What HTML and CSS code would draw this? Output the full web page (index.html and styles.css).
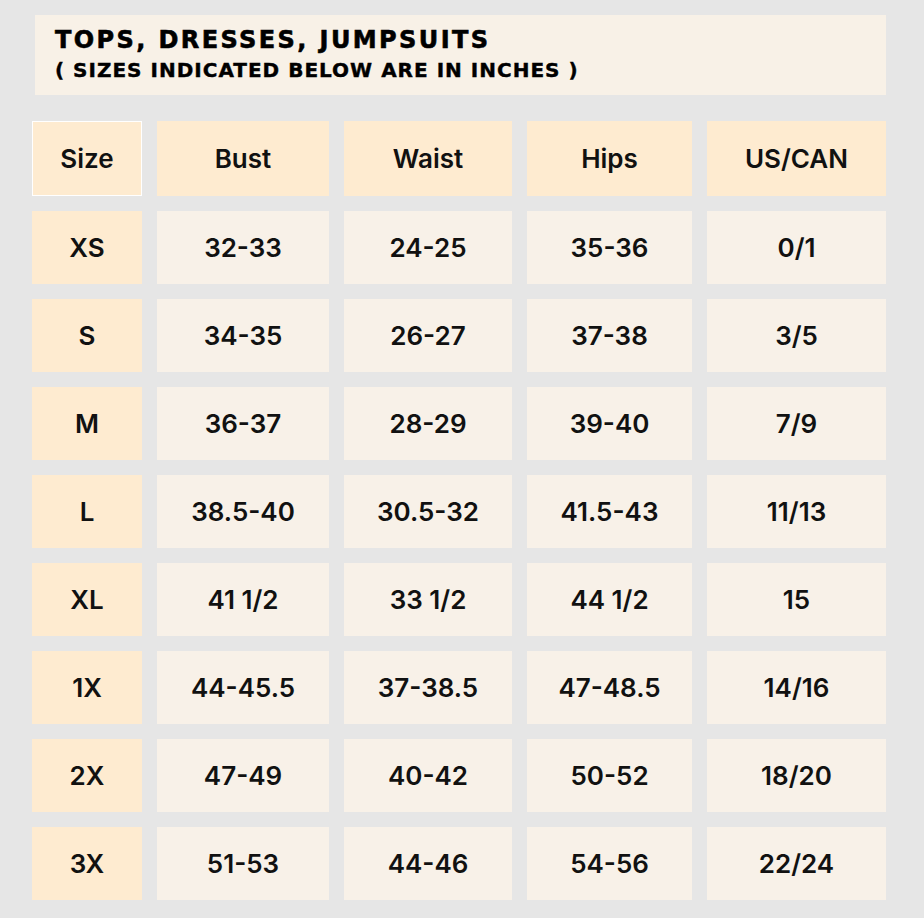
FILE: index.html
```html
<!DOCTYPE html>
<html>
<head>
<meta charset="utf-8">
<link rel="stylesheet" href="styles.css">
</head>
<body>
<div class="page">
  <div class="banner">
    <div class="title">TOPS, DRESSES, JUMPSUITS</div>
    <div class="subtitle">( SIZES INDICATED BELOW ARE IN INCHES )</div>
  </div>
  <div class="chart">
    <div class="cell head first">Size</div>
    <div class="cell head">Bust</div>
    <div class="cell head">Waist</div>
    <div class="cell head">Hips</div>
    <div class="cell head">US/CAN</div>

    <div class="cell size">XS</div><div class="cell">32-33</div><div class="cell">24-25</div><div class="cell">35-36</div><div class="cell">0/1</div>
    <div class="cell size">S</div><div class="cell">34-35</div><div class="cell">26-27</div><div class="cell">37-38</div><div class="cell">3/5</div>
    <div class="cell size">M</div><div class="cell">36-37</div><div class="cell">28-29</div><div class="cell">39-40</div><div class="cell">7/9</div>
    <div class="cell size">L</div><div class="cell">38.5-40</div><div class="cell">30.5-32</div><div class="cell">41.5-43</div><div class="cell">11/13</div>
    <div class="cell size">XL</div><div class="cell">41 1/2</div><div class="cell">33 1/2</div><div class="cell">44 1/2</div><div class="cell">15</div>
    <div class="cell size">1X</div><div class="cell">44-45.5</div><div class="cell">37-38.5</div><div class="cell">47-48.5</div><div class="cell">14/16</div>
    <div class="cell size">2X</div><div class="cell">47-49</div><div class="cell">40-42</div><div class="cell">50-52</div><div class="cell">18/20</div>
    <div class="cell size">3X</div><div class="cell">51-53</div><div class="cell">44-46</div><div class="cell">54-56</div><div class="cell">22/24</div>
  </div>
</div>
</body>
</html>
```

FILE: styles.css
```css
html, body {
  margin: 0;
  padding: 0;
  background: #e6e6e6;
}
.page {
  width: 924px;
  height: 918px;
  padding: 15px 0 0 32px;
  box-sizing: border-box;
}
.banner {
  margin-left: 3px;
  width: 851px;
  height: 80px;
  background: #f8f1e7;
  box-sizing: border-box;
  padding: 10px 0 0 20px;
  color: #000;
  font-family: "DejaVu Sans", sans-serif;
  font-weight: bold;
}
.title {
  font-size: 24px;
  line-height: 30px;
  letter-spacing: 2.4px;
  -webkit-text-stroke: 0.6px #000;
}
.subtitle {
  margin-top: 2px;
  font-size: 20px;
  line-height: 26px;
  letter-spacing: 1px;
  -webkit-text-stroke: 0.4px #000;
}
.chart {
  margin-top: 26px;
  display: grid;
  grid-template-columns: 110px 172px 168px 165px 179px;
  grid-template-rows: 75px repeat(8, 73px);
  column-gap: 15px;
  row-gap: 15px;
}
.cell {
  background: #f8f1e8;
  display: flex;
  align-items: center;
  justify-content: center;
  font-family: "Inter", sans-serif;
  font-weight: 600;
  font-size: 26px;
  color: #111;
}
.head, .size {
  background: #feebd0;
}
.first {
  border: 1px solid #ffffff;
}
```
